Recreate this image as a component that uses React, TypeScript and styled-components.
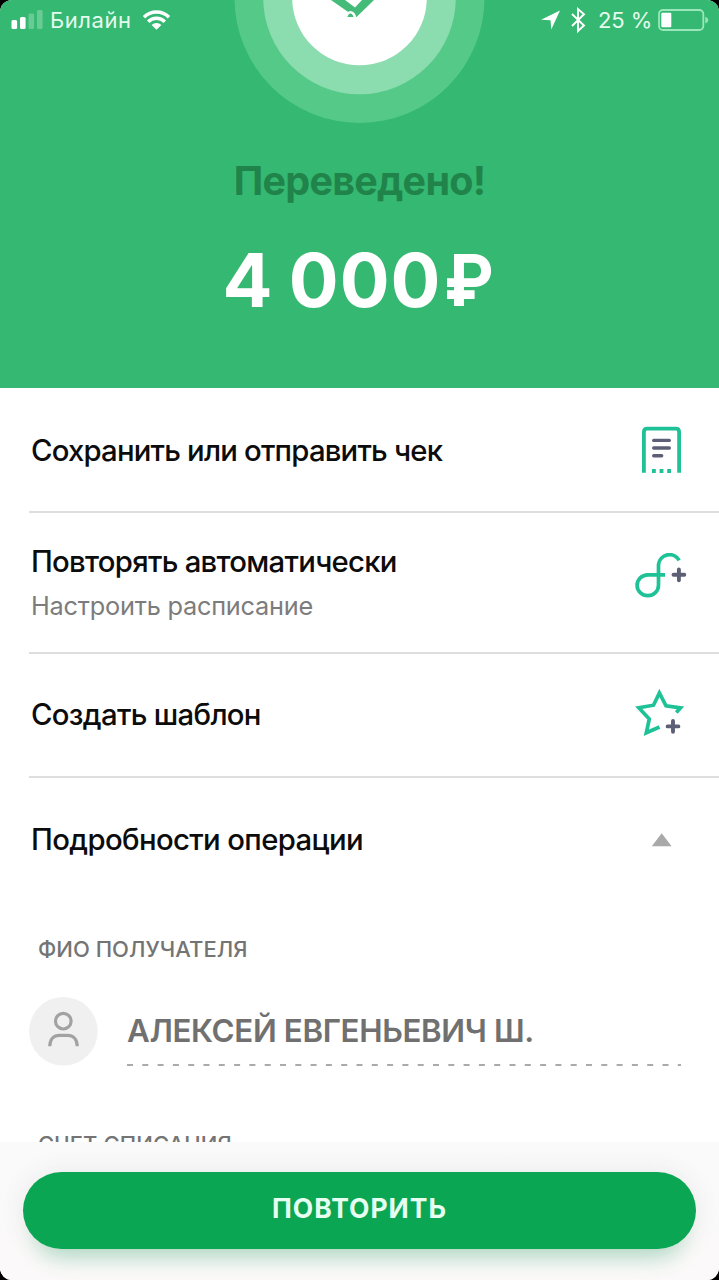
import React from 'react';
import styled, { createGlobalStyle } from 'styled-components';

const GlobalStyle = createGlobalStyle`
  * { box-sizing: border-box; }
  html, body { margin: 0; padding: 0; background: #000; }
  body { font-family: Inter, "Liberation Sans", sans-serif; }
`;

const Screen = styled.div`
  width: 719px;
  height: 1280px;
  display: flex;
  flex-direction: column;
  overflow: hidden;
  background: #fff;
  border-radius: 12px;
`;

const Scroll = styled.main`
  flex: 1;
  min-height: 0;
  overflow: hidden;
`;

const Hero = styled.header`
  position: relative;
  height: 388px;
  background: #35b871;
  display: flex;
  flex-direction: column;
  align-items: center;
`;

const Badge = styled.svg`
  position: absolute;
  top: 0;
  left: 234px;
  width: 251px;
  height: 124px;
`;

const StatusBar = styled.div`
  position: relative;
  width: 100%;
  height: 40px;
  padding: 0 10px 0 11px;
  display: flex;
  align-items: center;
  color: #e4fbee;
`;

const StatusText = styled.span<{ $spacing: number; $width: number }>`
  width: ${p => p.$width}px;
  font-size: 22px;
  line-height: 40px;
  white-space: nowrap;
  letter-spacing: ${p => p.$spacing}px;
`;

const Gap = styled.div<{ $width?: number }>`
  flex: ${p => (p.$width ? `0 0 ${p.$width}px` : '1')};
`;

const Icon = styled.svg<{ $ml?: number }>`
  display: block;
  flex: none;
  overflow: visible;
  margin-left: ${p => p.$ml ?? 0}px;
`;

const HeroTitle = styled.h1`
  margin: 116px 0 0;
  font-size: 39.5px;
  line-height: 50px;
  font-weight: 700;
  letter-spacing: -0.75px;
  color: #20844a;
  white-space: nowrap;
`;

const Amount = styled.div`
  width: 276px;
  margin-top: 34px;
  display: flex;
  font-size: 74px;
  line-height: 80px;
  font-weight: 700;
  color: #fff;
  white-space: nowrap;
`;

const Digits = styled.span`
  width: 223px;
  padding-left: 1px;
  letter-spacing: 0.9px;
  word-spacing: -3px;
`;

const Currency = styled.span`
  font-size: 72px;
  font-weight: 700;
  transform: scaleX(0.93);
  transform-origin: left center;
`;

const Row = styled.section<{ $height: number; $shift?: number; $last?: boolean }>`
  height: ${p => p.$height}px;
  margin-left: 29px;
  padding: ${p => p.$shift ?? 0}px 0 0 2px;
  display: flex;
  align-items: center;
  justify-content: space-between;
  border-bottom: ${p => (p.$last ? '0' : '2px solid #dedede')};
`;

const RowText = styled.div`
  display: flex;
  flex-direction: column;
  gap: 8px;
`;

const RowTitle = styled.div<{ $spacing: number; $drop?: number }>`
  padding-top: ${p => p.$drop ?? 0}px;
  font-size: 29.3px;
  line-height: 36px;
  font-weight: 500;
  letter-spacing: ${p => p.$spacing}px;
  color: #0c0c0c;
  white-space: nowrap;
`;

const RowHint = styled.div`
  font-size: 25.3px;
  line-height: 35px;
  letter-spacing: -0.22px;
  color: #7c7c7c;
  white-space: nowrap;
`;

const RowIcon = styled.svg`
  display: block;
  flex: none;
  width: 60px;
  height: 60px;
  margin-right: 29px;
`;

const Details = styled.section`
  padding: 32px 38px 0 29px;
`;

const FieldLabel = styled.div<{ $spacing: number }>`
  padding-left: 9px;
  font-size: 22px;
  line-height: 30px;
  font-weight: 500;
  letter-spacing: ${p => p.$spacing}px;
  color: #747474;
  white-space: nowrap;
`;

const Person = styled.div`
  display: flex;
  margin: 33px 0 62px;
  gap: 29px;
  height: 70px;
`;

const Avatar = styled.svg`
  flex: none;
  width: 69px;
  height: 69px;
`;

const PersonField = styled.div`
  flex: 1;
  display: flex;
  flex-direction: column;
`;

const PersonName = styled.div`
  height: 67px;
  font-size: 31.3px;
  line-height: 68px;
  font-weight: 600;
  letter-spacing: -0.35px;
  color: #707070;
  white-space: nowrap;
`;

const Dashes = styled.svg`
  display: block;
  width: 555px;
  height: 2px;
`;

const Footer = styled.footer`
  flex: none;
  height: 138px;
  padding: 30px 23px 0;
  background: linear-gradient(#fafafa, #fbf9f9);
`;

const RepeatButton = styled.button`
  display: block;
  width: 673px;
  height: 77px;
  padding: 0 0 5px;
  border: 0;
  border-radius: 39px;
  background: #0aa653;
  box-shadow: 0 22px 22px -14px rgba(20, 160, 90, 0.3), 0 0 26px rgba(70, 70, 70, 0.09);
  color: #e6fff1;
  font-family: inherit;
  font-size: 26.5px;
  line-height: 32px;
  font-weight: 700;
  letter-spacing: 1px;
`;

function SuccessBadge() {
  return (
    <Badge viewBox="234 0 251 124">
      <circle cx="359.5" cy="-2" r="125" fill="#55ca88" />
      <circle cx="359.5" cy="-2" r="96.3" fill="#8bdcae" />
      <circle cx="359.5" cy="-2" r="67.3" fill="#fff" />
      <path d="M331 0L356 17.6L374 0H362L355 7.4L345 0Z" fill="#45bb79" />
      <ellipse cx="350.5" cy="19" rx="4.6" ry="6.8" fill="#45bb79" stroke="#fff" strokeWidth="2.6" />
      <path d="M340 17H356.4V28H340Z" fill="#fff" />
    </Badge>
  );
}

function Status() {
  return (
    <StatusBar>
      <Icon width="33" height="20" viewBox="11 10 33 20">
        <rect x="11.5" y="20" width="5.6" height="9" rx="1.5" fill="#fff" />
        <rect x="20" y="17" width="5.6" height="12" rx="1.5" fill="#fff" />
        <rect x="28.5" y="13.5" width="5.6" height="15.5" rx="1.5" fill="#69cb94" />
        <rect x="37" y="10" width="5.6" height="19" rx="1.5" fill="#69cb94" />
      </Icon>
      <Gap $width={6} />
      <StatusText $spacing={0.55} $width={93}>Билайн</StatusText>
      <Icon width="27" height="20" viewBox="143 9 27 20">
        <g fill="none" stroke="#fff" strokeWidth="3.5">
          <path d="M144 16.2A17.8 17.8 0 0 1 169 16.2" />
          <path d="M148.2 20.7A11.8 11.8 0 0 1 164.8 20.7" />
        </g>
        <path d="M151.6 24A6.9 6.9 0 0 1 161.4 24L156.5 28.8Z" fill="#fff" />
      </Icon>
      <Gap />
      <Icon width="20" height="20" viewBox="541 10 20 20">
        <path d="M560 10.6L541 19.8L550.5 20.2L551.3 29.5Z" fill="#fff" />
      </Icon>
      <Icon $ml={10} width="14" height="24" viewBox="571 8 14 24">
        <path d="M572 14L584 25.5L578 31V9L584 14.3L572 26" fill="none" stroke="#fff" strokeWidth="1.9" />
      </Icon>
      <Gap $width={13} />
      <StatusText $spacing={-0.1} $width={60}>25 %</StatusText>
      <Icon width="51" height="22" viewBox="658 9 51 22">
        <rect x="659" y="10" width="44.3" height="20" rx="4" fill="none" stroke="#9be6bb" strokeWidth="1.8" />
        <rect x="661.3" y="12.8" width="10" height="14.4" rx="1" fill="#fff" />
        <path d="M705.3 16.5Q708.3 18 708.3 20T705.3 23.5Z" fill="#9be6bb" />
      </Icon>
    </StatusBar>
  );
}

const TEAL = '#1fc297';
const SLATE = '#5d5f76';

export default function App() {
  return (
    <>
      <GlobalStyle />
      <Screen>
        <Scroll>
          <Hero>
            <SuccessBadge />
            <Status />
            <HeroTitle>Переведено!</HeroTitle>
            <Amount>
              <Digits>4 000</Digits>
              <Currency>₽</Currency>
            </Amount>
          </Hero>

          <Row $height={125} $shift={1}>
            <RowTitle $spacing={-0.8} $drop={2}>Сохранить или отправить чек</RowTitle>
            <RowIcon viewBox="630 420 60 60">
              <path d="M643.9 472.8V432Q643.9 428.7 647.2 428.7H675.8Q679.1 428.7 679.1 432V472.8" fill="none" stroke={TEAL} strokeWidth="3.8" />
              <path d="M653.7 440.4H669.3M653.7 448H669.3M653.7 455.7H661.7" stroke={SLATE} strokeWidth="3.4" strokeLinecap="round" />
              <path d="M652 471H655.8M659.6 471H663.4M667.2 471H671" stroke={TEAL} strokeWidth="3.8" />
            </RowIcon>
          </Row>

          <Row $height={141} $shift={1}>
            <RowText>
              <RowTitle $spacing={-0.72} $drop={1}>Повторять автоматически</RowTitle>
              <RowHint>Настроить расписание</RowHint>
            </RowText>
            <RowIcon viewBox="630 553 60 60">
              <path d="M665 574.8H647.8A10.7 10.4 0 1 0 658.5 585.2V564.5A11.1 11.1 0 0 1 679.2 560.3" fill="none" stroke={TEAL} strokeWidth="3.7" />
              <path d="M673.5 574.8H684.3M678.9 569.4V580.2" stroke={SLATE} strokeWidth="3.9" strokeLinecap="round" />
            </RowIcon>
          </Row>

          <Row $height={124}>
            <RowTitle $spacing={-0.68}>Создать шаблон</RowTitle>
            <RowIcon viewBox="630 685 60 60">
              <path d="M676.3 712.4L680.5 707.8L666 705.8L659.4 693L653.5 705.2L638.8 707.8L649.3 719L646.3 732.8L659.5 727" fill="none" stroke={TEAL} strokeWidth="3.7" />
              <path d="M667.6 726.4H678.4M673 721V731.8" stroke={SLATE} strokeWidth="3.9" strokeLinecap="round" />
            </RowIcon>
          </Row>

          <Row $height={124} $last>
            <RowTitle $spacing={-0.62}>Подробности операции</RowTitle>
            <RowIcon viewBox="630 810 60 60">
              <path d="M661.7 833.2L671.6 846.3H651.8Z" fill="#a9a9a9" />
            </RowIcon>
          </Row>

          <Details>
            <FieldLabel $spacing={0.02}>ФИО ПОЛУЧАТЕЛЯ</FieldLabel>
            <Person>
              <Avatar viewBox="29 997 69 69">
                <circle cx="63.4" cy="1031.3" r="34.3" fill="#f0f0f0" />
                <g fill="none" stroke="#a2a2a2" strokeWidth="3.2">
                  <circle cx="63.3" cy="1021.2" r="7.8" />
                  <path d="M49.8 1046.3C49.8 1038.8 54 1035.3 59.5 1035.3H67.5C73 1035.3 77.2 1038.8 77.2 1046.3" />
                </g>
              </Avatar>
              <PersonField>
                <PersonName>АЛЕКСЕЙ ЕВГЕНЬЕВИЧ Ш.</PersonName>
                <Dashes viewBox="0 0 555 2">
                  <path d="M0 1H554" stroke="#aaa" strokeWidth="2" strokeDasharray="6 9.3" />
                </Dashes>
              </PersonField>
            </Person>
            <FieldLabel $spacing={0.08}>СЧЕТ СПИСАНИЯ</FieldLabel>
          </Details>
        </Scroll>

        <Footer>
          <RepeatButton>ПОВТОРИТЬ</RepeatButton>
        </Footer>
      </Screen>
    </>
  );
}
